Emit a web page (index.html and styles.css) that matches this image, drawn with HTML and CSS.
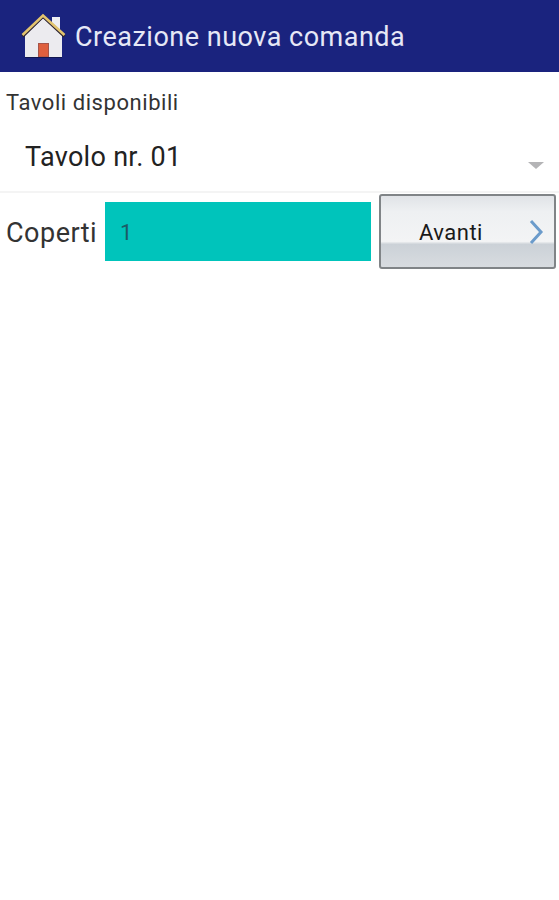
FILE: index.html
```html
<!DOCTYPE html>
<html lang="it">
<head>
<meta charset="utf-8">
<title>Creazione nuova comanda</title>
<link rel="stylesheet" href="styles.css">
</head>
<body>
<header class="bar">
  <svg class="home" width="46" height="46" viewBox="0 0 46 46">
    <rect x="32" y="4" width="8" height="16" fill="#eeeef2"/>
    <path d="M5 22 L23 5 L42 22 V44 H5 Z" fill="#ecebef"/>
    <path d="M2.500 23.500 L23 3.500 L44.500 23.500" fill="none" stroke="#2c2230" stroke-width="3"/>
    <path d="M2.500 22 L23 2.500 L44.500 22" fill="none" stroke="#e3c46f" stroke-width="2.500"/>
    <rect x="18.500" y="30.500" width="10" height="13.500" fill="#de5f3e" stroke="#a5544a" stroke-width="1"/>
    <path d="M5 44.500 H42" stroke="#11164f" stroke-width="1"/>
  </svg>
  <h1 class="title">Creazione nuova comanda</h1>
</header>
<main>
  <div class="label">Tavoli disponibili</div>
  <div class="select">
    <span class="select-value">Tavolo nr. 01</span>
    <span class="caret"></span>
  </div>
  <div class="row">
    <span class="coperti">Coperti</span>
    <div class="input">1</div>
    <button class="next" type="button">
      <span class="next-label">Avanti</span>
      <svg class="chev" width="16" height="26" viewBox="0 0 16 26">
        <path d="M3 2 L13 13 L3 24" fill="none" stroke="#6b9bcb" stroke-width="3"/>
      </svg>
    </button>
  </div>
</main>
</body>
</html>
```
FILE: styles.css
```css
html, body {
  margin: 0;
  padding: 0;
  background: #fff;
  font-family: Roboto, "Liberation Sans", sans-serif;
}
body {
  width: 559px;
  height: 900px;
  overflow: hidden;
}
.bar {
  height: 72px;
  background: #1a237e;
  display: flex;
  align-items: center;
  padding-left: 20px;
  gap: 9px;
  box-sizing: border-box;
}
.home {
  flex: none;
}
.title {
  margin: 2px 0 0;
  font-size: 27px;
  letter-spacing: 0.5px;
  font-weight: 400;
  color: #e6e8f6;
  white-space: nowrap;
}
.label {
  padding: 19px 0 0 6px;
  height: 24px;
  font-size: 22px;
  letter-spacing: 0.55px;
  line-height: 24px;
  color: #333;
}
.select {
  height: 76px;
  padding-left: 25px;
  display: flex;
  align-items: center;
  position: relative;
  border-bottom: 2px solid #f4f4f4;
}
.select-value {
  font-size: 27px;
  letter-spacing: 0.3px;
  color: #222;
  margin-top: 8px;
}
.caret {
  position: absolute;
  right: 15px;
  top: 47px;
  border-left: 8px solid transparent;
  border-right: 8px solid transparent;
  border-top: 7px solid #b4b4b6;
}
.row {
  display: flex;
  align-items: center;
  height: 76px;
}
.coperti {
  width: 105px;
  box-sizing: border-box;
  padding-left: 6px;
  padding-top: 4px;
  font-size: 27px;
  letter-spacing: 0.5px;
  color: #333;
  flex: none;
}
.input {
  width: 266px;
  height: 59px;
  background: #00c4bb;
  box-sizing: border-box;
  padding-left: 15px;
  font-size: 22px;
  line-height: 61px;
  color: #1c5b66;
  flex: none;
}
.next {
  flex: none;
  margin: 0 0 0 8px;
  padding: 0;
  width: 177px;
  height: 75px;
  box-sizing: border-box;
  border: 2px solid #808487;
  border-radius: 3px;
  background: linear-gradient(#e0e3e7 0, #eef0f2 22%, #f3f4f5 64%, #cbd1d7 68%, #d8dce0 100%);
  position: relative;
  font-family: Roboto, "Liberation Sans", sans-serif;
}
.next-label {
  position: absolute;
  left: 38px;
  top: 24px;
  font-size: 22px;
  letter-spacing: 0.5px;
  line-height: 26px;
  color: #1a1a1a;
}
.chev {
  position: absolute;
  right: 10px;
  top: 23px;
}
```
